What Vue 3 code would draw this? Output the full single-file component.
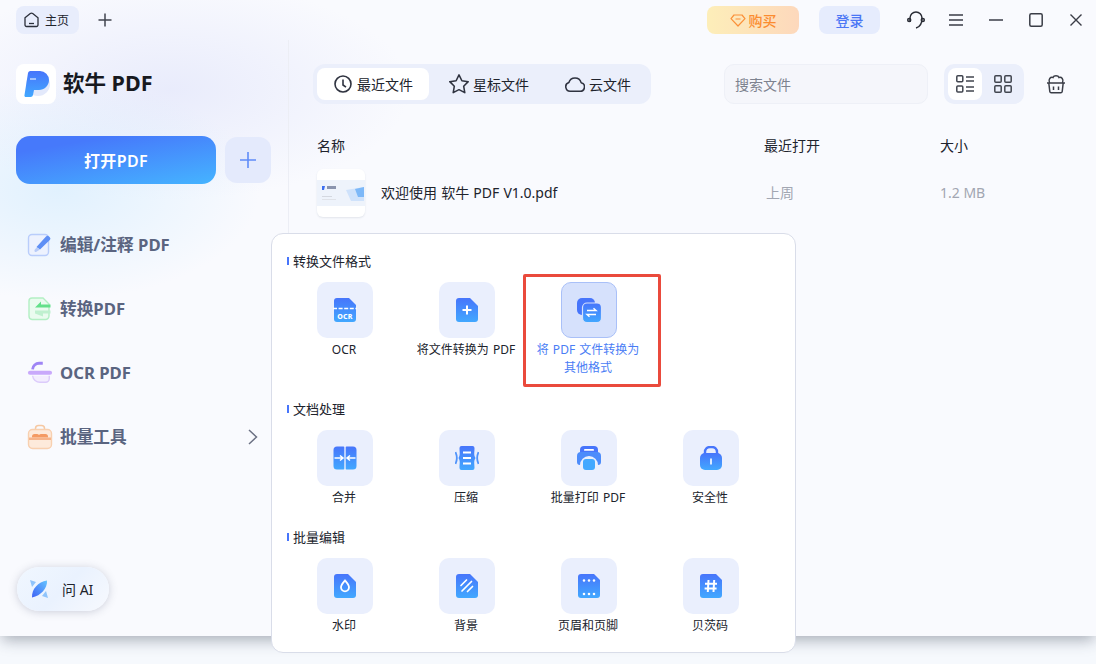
<script setup>
const tabs = [
  { label: '最近文件', icon: 'i-clock', active: true },
  { label: '星标文件', icon: 'i-star' },
  { label: '云文件', icon: 'i-cloud' },
]

const navItems = [
  { label: '编辑/注释 PDF', icon: 'n-edit' },
  { label: '转换PDF', icon: 'n-convert' },
  { label: 'OCR PDF', icon: 'n-ocr' },
  { label: '批量工具', icon: 'n-batch', more: true },
]

const sections = [
  {
    title: '转换文件格式',
    tools: [
      { label: 'OCR', icon: 't-ocr' },
      { label: '将文件转换为 PDF', icon: 't-add' },
      { label: '将 PDF 文件转换为\n其他格式', icon: 't-convert', active: true },
    ],
  },
  {
    title: '文档处理',
    tools: [
      { label: '合并', icon: 't-merge' },
      { label: '压缩', icon: 't-compress' },
      { label: '批量打印 PDF', icon: 't-print' },
      { label: '安全性', icon: 't-lock' },
    ],
  },
  {
    title: '批量编辑',
    tools: [
      { label: '水印', icon: 't-water' },
      { label: '背景', icon: 't-bg' },
      { label: '页眉和页脚', icon: 't-header' },
      { label: '贝茨码', icon: 't-bates' },
    ],
  },
]
</script>

<template>
  <div class="window">
    <svg class="defs" width="0" height="0" aria-hidden="true">
      <defs>
        <linearGradient id="blue" x1="0" y1="0" x2="0" y2="1">
          <stop offset="0" stop-color="#4775fb" />
          <stop offset="1" stop-color="#42a8ff" />
        </linearGradient>
        <linearGradient id="leaf" x1="0" y1="1" x2="1" y2="0">
          <stop offset="0" stop-color="#3f62f5" />
          <stop offset="1" stop-color="#63c4ff" />
        </linearGradient>
        <symbol id="t-ocr" viewBox="0 0 24 24">
          <path d="M4 0h12l7 7v14a3 3 0 0 1-3 3H4a3 3 0 0 1-3-3V3a3 3 0 0 1 3-3z" fill="url(#blue)" />
          <path d="M0 10.500h24" stroke="#fff" stroke-width="1.400" stroke-dasharray="4 1.600" />
          <text x="12" y="20.500" text-anchor="middle" class="ocr-text">OCR</text>
        </symbol>
        <symbol id="t-add" viewBox="0 0 24 24">
          <path d="M4 0h11l8 8v13a3 3 0 0 1-3 3H4a3 3 0 0 1-3-3V3a3 3 0 0 1 3-3z" fill="url(#blue)" />
          <path d="M12 7.500v9M7.500 12h9" stroke="#fff" stroke-width="2" />
        </symbol>
        <symbol id="t-convert" viewBox="0 0 24 24">
          <rect x="0" y="0" width="18" height="17" rx="5" fill="#4775fb" />
          <rect x="5.500" y="5" width="19" height="19.500" rx="4.500" fill="url(#blue)" stroke="#d6e1fc" stroke-width="1.200" />
          <path d="M10 12.500h9l-2.500-2.200M19 16.500h-9l2.500 2.200" fill="none" stroke="#fff" stroke-width="1.400" />
        </symbol>
        <symbol id="t-merge" viewBox="0 0 24 24">
          <path d="M4 .5h6.500a.8.8 0 0 1 .8.8v21.400a.8.8 0 0 1-.8.8H4a3.500 3.500 0 0 1-3.500-3.500V4A3.500 3.500 0 0 1 4 .5zM13.500.5H20A3.500 3.500 0 0 1 23.500 4v16a3.500 3.500 0 0 1-3.500 3.500h-6.500a.8.8 0 0 1-.8-.8V1.300a.8.8 0 0 1 .8-.8z" fill="url(#blue)" />
          <path d="M1.500 12h7.500M22.500 12H15M7 9.500 10 12l-3 2.500M17 9.500 14 12l3 2.500" fill="none" stroke="#fff" stroke-width="1.500" />
        </symbol>
        <symbol id="t-compress" viewBox="0 0 24 24">
          <path d="M4.500 2a2 2 0 0 1 2-2h11a2 2 0 0 1 2 2c0 5-1 6.500 1 10-2 3.500-1 5-1 10a2 2 0 0 1-2 2h-11a2 2 0 0 1-2-2c0-5 1-6.500-1-10 2-3.500 1-5 1-10z" fill="url(#blue)" />
          <path d="M8 6.500h8M8 12h8M8 17.500h8" stroke="#fff" stroke-width="2" />
          <path d="M.5 6c1.800 4 1.800 8 0 12M23.500 6c-1.800 4-1.800 8 0 12" fill="none" stroke="#4f93fb" stroke-width="1.800" />
        </symbol>
        <symbol id="t-print" viewBox="0 0 24 24">
          <path d="M7 0h10a4 4 0 0 1 4 4v3H3V4a4 4 0 0 1 4-4z" fill="#4775fb" />
          <rect x="7" y="3" width="10" height="1.800" rx=".9" fill="#fff" />
          <path d="M4 6h16a4 4 0 0 1 4 4v6a3 3 0 0 1-3 3 8.500 8.500 0 0 0-18 0 3 3 0 0 1-3-3v-6a4 4 0 0 1 4-4z" fill="#4c8cfb" />
          <rect x="6" y="13" width="12" height="11" rx="3" fill="#42a8ff" />
        </symbol>
        <symbol id="t-lock" viewBox="0 0 24 24">
          <path d="M6 9V6a5 5 0 0 1 5-5h2a5 5 0 0 1 5 5v3" fill="none" stroke="#4775fb" stroke-width="2.400" />
          <rect x="1" y="7" width="22" height="17" rx="5" fill="url(#blue)" />
          <rect x="11.200" y="12.500" width="1.600" height="6" fill="#fff" />
        </symbol>
        <symbol id="t-water" viewBox="0 0 24 24">
          <path d="M4 0h11l8 8v13a3 3 0 0 1-3 3H4a3 3 0 0 1-3-3V3a3 3 0 0 1 3-3z" fill="url(#blue)" />
          <path d="M12 6.500c2.500 3 4 4.600 4 6.800a4 4 0 0 1-8 0c0-2.200 1.500-3.800 4-6.800z" fill="none" stroke="#fff" stroke-width="1.800" />
        </symbol>
        <symbol id="t-bg" viewBox="0 0 24 24">
          <path d="M4 0h11l8 8v13a3 3 0 0 1-3 3H4a3 3 0 0 1-3-3V3a3 3 0 0 1 3-3z" fill="url(#blue)" />
          <path d="M6 11.500 11.500 6M7 17l9.500-9.500M12.500 17.500 17.500 12.500" stroke="#fff" stroke-width="1.700" stroke-linecap="round" />
        </symbol>
        <symbol id="t-header" viewBox="0 0 24 24">
          <path d="M4 0h13l6 6v15a3 3 0 0 1-3 3H4a3 3 0 0 1-3-3V3a3 3 0 0 1 3-3z" fill="url(#blue)" />
          <path d="M7 6.500h.01M12 6.500h.01M17 6.500h.01M7 20h.01M12 20h.01M17 20h.01" stroke="#fff" stroke-width="2.600" stroke-linecap="round" />
        </symbol>
        <symbol id="t-bates" viewBox="0 0 24 24">
          <path d="M4 0h13l6 6v15a3 3 0 0 1-3 3H4a3 3 0 0 1-3-3V3a3 3 0 0 1 3-3z" fill="url(#blue)" />
          <path d="M9.500 6 8.800 18M15.200 6l-.7 12M6 9.800h12M5.600 14.400h12" stroke="#fff" stroke-width="2" />
        </symbol>
        <symbol id="i-clock" viewBox="0 0 20 20">
          <circle cx="10" cy="10" r="8" fill="none" stroke="#2f3340" stroke-width="1.600" />
          <path d="M10 5.500V11l3 2.200" fill="none" stroke="#2f3340" stroke-width="1.600" />
        </symbol>
        <symbol id="i-star" viewBox="1 1 18 18">
          <path d="m10 1.800 2.600 5.300 5.700.8-4.100 4.100 1 5.800L10 15.100l-5.200 2.700 1-5.800L1.700 7.900l5.700-.8z" fill="none" stroke="#2f3340" stroke-width="1.400" stroke-linejoin="round" />
        </symbol>
        <symbol id="i-cloud" viewBox="1 1 18 18">
          <path d="M6 16.500h8.500a3.900 3.900 0 0 0 1-7.700 5.700 5.700 0 0 0-11-.1A4 4 0 0 0 6 16.500z" fill="none" stroke="#2f3340" stroke-width="1.400" stroke-linejoin="round" />
        </symbol>
        <symbol id="n-edit" viewBox="0 0 26 26">
          <rect x="1.500" y="2.500" width="20" height="21" rx="3.500" fill="#edf2fe" stroke="#b9cdfb" stroke-width="1.400" />
          <path d="M9.500 15 19 4.500a2 2 0 0 1 3 0l.8.800a2 2 0 0 1 0 2.800L13 17.500z" fill="#5f8ff5" />
          <path d="M9.500 15.500 13 17.500 9 20a1.500 1.500 0 0 1-1.500-2z" fill="#b7cbf8" />
        </symbol>
        <symbol id="n-convert" viewBox="0 0 26 26">
          <path d="M5 2h11l6 6v12a3.500 3.500 0 0 1-3.500 3.500H5A3.500 3.500 0 0 1 2 20V5a3 3 0 0 1 3-3z" fill="#eafbef" stroke="#b3efc4" stroke-width="1.400" />
          <path d="M8 11.500 14 5.500v3h9.500v3z" fill="#63e08a" />
          <path d="M8 14.500h15.500v3h-7.500v3l-8-3z" fill="#bff0cf" />
        </symbol>
        <symbol id="n-ocr" viewBox="0 0 28 26">
          <path d="M6 9a7 7 0 0 1 7-6.500h4" fill="none" stroke="#9f85f5" stroke-width="3" />
          <path d="M6 16a8 8 0 0 0 8 7h6a4 4 0 0 0 4-4v-3" fill="#f3edfe" stroke="#dccbfb" stroke-width="1.500" />
          <rect x="1" y="10.500" width="26" height="4.500" rx="2.200" fill="#c9a9fb" />
        </symbol>
        <symbol id="n-batch" viewBox="0 0 26 26">
          <path d="M8.500 6V4.500A3 3 0 0 1 11.500 1.500h3a3 3 0 0 1 3 3V6" fill="none" stroke="#f6c8a2" stroke-width="1.500" />
          <rect x="1.500" y="5.500" width="23" height="19" rx="4" fill="#fdeadb" stroke="#f8d0b0" stroke-width="1.400" />
          <path d="M5 12.500a2.500 2.500 0 0 1 2.500-2.500h2.500a2.500 2.500 0 0 1 2 1 2.500 2.500 0 0 1 2-1h4.500a2.500 2.500 0 0 1 2.500 2.500v1H5z" fill="#f49a63" />
          <rect x="2" y="13.500" width="22" height="2.500" fill="#f7b48a" />
        </symbol>
      </defs>
    </svg>

    <header class="topbar">
      <div class="home-tab">
        <svg width="15" height="16" viewBox="0 0 15 16" fill="none" stroke="#2b2f3a" stroke-width="1.300">
          <path d="M1 5.800 6.300 1.500a2 2 0 0 1 2.400 0L14 5.800V13a1.500 1.500 0 0 1-1.500 1.500h-10A1.500 1.500 0 0 1 1 13z" />
          <path d="M5 11.500h5" />
        </svg>
        <span>主页</span>
      </div>
      <svg class="new-tab" width="14" height="14" viewBox="0 0 14 14" stroke="#40444f" stroke-width="1.500">
        <path d="M7 .5v13M.5 7h13" />
      </svg>
      <div class="top-right">
        <button class="buy-btn">
          <svg width="16" height="13" viewBox="0 0 16 13" fill="none" stroke="#fb9038" stroke-width="1.200">
            <path d="M4 1h8l3 3.700-7 7.300-7-7.300zM5.500 5h5" stroke-linejoin="round" />
          </svg>
          购买
        </button>
        <button class="login-btn">登录</button>
        <div class="win-btn">
          <svg width="20" height="20" viewBox="0 0 20 20" fill="none" stroke="#2a2d36" stroke-width="1.500">
            <path d="M4 12V8a6 6 0 0 1 12 0c0 6-2 9-6 10" />
            <circle cx="3.200" cy="10" r="1.500" />
            <circle cx="16.800" cy="10" r="1.500" />
          </svg>
        </div>
        <div class="win-btn">
          <svg width="14" height="12" viewBox="0 0 14 12" stroke="#3a3d47" stroke-width="1.500">
            <path d="M0 1h14M0 6h14M0 11h14" />
          </svg>
        </div>
        <div class="win-btn">
          <svg width="14" height="2" viewBox="0 0 14 2" stroke="#3a3d47" stroke-width="1.500">
            <path d="M0 1h14" />
          </svg>
        </div>
        <div class="win-btn">
          <svg width="14" height="14" viewBox="0 0 14 14" fill="none" stroke="#3a3d47" stroke-width="1.500">
            <rect x=".8" y=".8" width="12.400" height="12.400" rx="1.500" />
          </svg>
        </div>
        <div class="win-btn">
          <svg width="12" height="12" viewBox="0 0 12 12" stroke="#3a3d47" stroke-width="1.400">
            <path d="m.5.500 11 11M11.500.5l-11 11" />
          </svg>
        </div>
      </div>
    </header>

    <div class="body">
      <aside class="sidebar">
        <div class="brand">
          <div class="logo">
            <svg width="32" height="32" viewBox="0 0 32 32">
              <circle cx="18" cy="16" r="12" fill="#e3e9fb" />
              <path d="M10 3h10a9 9 0 0 1 9 9c0 6-5 10-10 10h-5l-1 5a2.500 2.500 0 0 1-2.500 2H6a1.500 1.500 0 0 1-1.500-2L8 5a2.500 2.500 0 0 1 2-2z" fill="url(#blue)" />
              <path d="M10 11h6" stroke="#fff" stroke-width="1" />
            </svg>
          </div>
          <span class="brand-name">软牛 PDF</span>
        </div>

        <div class="open-row">
          <button class="open-btn">打开PDF</button>
          <button class="add-btn">
            <svg width="16" height="16" viewBox="0 0 16 16" stroke="#5f8cf8" stroke-width="1.600">
              <path d="M8 0v16M0 8h16" />
            </svg>
          </button>
        </div>

        <nav class="nav">
          <div v-for="item in navItems" :key="item.label" class="nav-item">
            <svg width="26" height="26"><use :href="'#' + item.icon" /></svg>
            <span>{{ item.label }}</span>
            <svg v-if="item.more" class="chevron" width="10" height="16" viewBox="0 0 10 16" fill="none" stroke="#6b7083" stroke-width="1.500">
              <path d="m1 1 7.500 7L1 15" />
            </svg>
          </div>
        </nav>

        <div class="ask-ai">
          <svg width="20" height="20" viewBox="0 0 20 20">
            <path d="M1 1 7 3 3 8zM19 19l-6-2 4-5z" fill="#8fc4fb" />
            <path d="M18 1.500c.5 8-6 15-15 17C2.500 10 9 3 18 1.500z" fill="url(#leaf)" />
          </svg>
          <span>问 AI</span>
        </div>
      </aside>

      <main class="main">
        <div class="toolbar">
          <div class="tabs">
            <div v-for="tab in tabs" :key="tab.label" class="tab" :class="{ active: tab.active }">
              <svg width="20" height="20"><use :href="'#' + tab.icon" /></svg>
              <span>{{ tab.label }}</span>
            </div>
          </div>
          <div class="search">搜索文件</div>
          <div class="views">
            <div class="view active">
              <svg width="18" height="18" viewBox="0 0 18 18" fill="none" stroke="#41454f" stroke-width="1.500">
                <rect x=".8" y=".8" width="6" height="6" rx="1" />
                <rect x=".8" y="11" width="6" height="6" rx="1" />
                <path d="M10 2h8M10 6h8M10 12h8M10 16h8" />
              </svg>
            </div>
            <div class="view">
              <svg width="18" height="18" viewBox="0 0 18 18" fill="none" stroke="#41454f" stroke-width="1.500">
                <rect x=".8" y=".8" width="6.400" height="6.400" rx="1" />
                <rect x="10.800" y=".8" width="6.400" height="6.400" rx="1" />
                <rect x=".8" y="10.800" width="6.400" height="6.400" rx="1" />
                <rect x="10.800" y="10.800" width="6.400" height="6.400" rx="1" />
              </svg>
            </div>
          </div>
          <div class="trash">
            <svg width="20" height="20" viewBox="0 0 20 20" fill="none" stroke="#3a3d47" stroke-width="1.500">
              <path d="M1 9h18M2.800 9l1 8.500a1.500 1.500 0 0 0 1.500 1.300h9.400a1.500 1.500 0 0 0 1.500-1.300l1-8.500M7.500 12.500v3.500M12.500 12.500v3.500" />
              <path d="M3.500 9C2 5 4.500 2.800 7 3.500c.8-2.300 5.200-2.300 6 0 2.500-.7 5 1.500 3.500 5.500" />
            </svg>
          </div>
        </div>

        <div class="file-head">
          <span>名称</span>
          <span>最近打开</span>
          <span>大小</span>
        </div>
        <div class="file-row">
          <div class="file-name">
            <div class="thumb">
              <svg width="48" height="26" viewBox="0 0 48 26">
                <rect width="48" height="26" fill="#eef3fb" />
                <path d="M5 6h3l-1 4H5z" fill="#3d6ff0" />
                <rect x="10" y="6" width="9" height="3" fill="#8a94ae" />
                <path d="M29 10l18-3v14H34z" fill="#cfe2fb" />
                <path d="M38 9l9-2v10h-6z" fill="#7db8f8" />
                <rect x="5" y="16" width="10" height="1" fill="#d4d8e0" />
                <rect x="5" y="19" width="14" height="1" fill="#dfe2e8" />
              </svg>
            </div>
            <span class="row-text name-text">欢迎使用 软牛 PDF V1.0.pdf</span>
          </div>
          <span class="row-text muted recent">上周</span>
          <span class="row-text muted">1.2 MB</span>
        </div>
      </main>
    </div>

    <div class="tool-popup">
      <section v-for="section in sections" :key="section.title" class="tool-section">
        <h3>{{ section.title }}</h3>
        <div class="tool-grid">
          <div v-for="tool in section.tools" :key="tool.label" class="tool" :class="{ active: tool.active }">
            <div class="tool-icon">
              <svg width="24" height="24"><use :href="'#' + tool.icon" /></svg>
            </div>
            <div class="tool-label">{{ tool.label }}</div>
          </div>
        </div>
      </section>
      <div class="highlight"></div>
    </div>
  </div>
</template>

<style scoped>
.window {
  position: relative;
  height: 636px;
  display: flex;
  flex-direction: column;
  background:
    radial-gradient(ellipse 200px 110px at 60px 190px, rgba(195, 230, 255, .45), rgba(195, 230, 255, 0)),
    radial-gradient(ellipse 240px 110px at 170px 90px, rgba(222, 226, 250, .6), rgba(222, 226, 250, 0)),
    #f9fafe;
  box-shadow: 0 6px 14px -2px rgba(40, 50, 70, .38);
  font-family: "Noto Sans", "Noto Sans CJK SC", sans-serif;
  color: #20232c;
}

.defs {
  position: absolute;
}

.ocr-text {
  font: 800 7px "Noto Sans", sans-serif;
  fill: #fff;
  letter-spacing: .3px;
}

button {
  border: none;
  font-family: inherit;
  padding: 0;
}

.topbar {
  height: 40px;
  flex: none;
  display: flex;
  align-items: flex-start;
  padding: 6px 0 0 16px;
  box-sizing: border-box;
}

.home-tab {
  width: 63px;
  height: 28px;
  box-sizing: border-box;
  padding-left: 8px;
  display: flex;
  align-items: center;
  gap: 6px;
  background: #e8edfc;
  border-radius: 8px;
  font-size: 12px;
}

.new-tab {
  margin: 7px 0 0 19px;
}

.top-right {
  margin-left: auto;
  display: flex;
  align-items: center;
}

.buy-btn,
.login-btn {
  height: 28px;
  border-radius: 8px;
  font-size: 14px;
  font-weight: 500;
  display: flex;
  align-items: center;
  justify-content: center;
}

.buy-btn {
  width: 92px;
  gap: 3px;
  background: linear-gradient(90deg, #fdeeb9, #fdd8bc);
  color: #fb8c30;
}

.login-btn {
  width: 61px;
  margin: 0 16px 0 20px;
  background: #e6ecfd;
  color: #4a76f5;
}

.win-btn {
  width: 40px;
  height: 28px;
  display: flex;
  align-items: center;
  justify-content: center;
}

.body {
  flex: 1;
  display: flex;
  min-height: 0;
}

.sidebar {
  width: 289px;
  flex: none;
  box-sizing: border-box;
  border-right: 1px solid #eceef5;
  padding: 24px 0 25px 16px;
  display: flex;
  flex-direction: column;
}

.brand {
  display: flex;
  align-items: center;
  gap: 7px;
}

.logo {
  width: 40px;
  height: 40px;
  border-radius: 8px;
  background: #fff;
  display: flex;
  align-items: center;
  justify-content: center;
}

.brand-name {
  font-size: 21.500px;
  font-weight: 700;
  color: #17191f;
  padding-bottom: 6px;
}

.open-row {
  display: flex;
  align-items: center;
  gap: 9px;
  margin-top: 32px;
}

.open-btn {
  width: 200px;
  height: 48px;
  border-radius: 14px;
  background: linear-gradient(170deg, #4679fb 20%, #45b4ff 100%);
  color: #fff;
  font-size: 16px;
  letter-spacing: .4px;
  font-weight: 600;
}

.add-btn {
  width: 46px;
  height: 46px;
  border-radius: 12px;
  background: #e4eafc;
  display: flex;
  align-items: center;
  justify-content: center;
}

.nav {
  margin-top: 29px;
}

.nav-item {
  height: 64px;
  display: flex;
  align-items: center;
  gap: 7px;
  padding-left: 11px;
  padding-right: 30px;
  font-size: 16.700px;
  font-weight: 700;
  color: #5a6480;
}

.nav-item span {
  padding-bottom: 2px;
}

.chevron {
  margin-left: auto;
}

.ask-ai {
  margin-top: auto;
  margin-left: 1px;
  width: 92px;
  height: 44px;
  box-sizing: border-box;
  padding-left: 12px;
  display: flex;
  align-items: center;
  gap: 13px;
  border-radius: 22px;
  background: linear-gradient(135deg, #f0f7ff, #eaf2fe 50%, #f7f9fe);
  box-shadow: 0 1px 8px rgba(70, 80, 110, .25);
  font-size: 14px;
}

.main {
  flex: 1;
  min-width: 0;
  padding: 24px 0 0 24px;
}

.toolbar {
  display: flex;
  align-items: center;
}

.tabs {
  display: flex;
  gap: 4px;
  padding: 4px;
  background: #ebeffb;
  border-radius: 12px;
}

.tab {
  height: 32px;
  padding: 0 16px;
  display: flex;
  align-items: center;
  gap: 4px;
  border-radius: 8px;
  font-size: 14px;
}

.tab.active {
  background: #fff;
}

.search {
  width: 204px;
  height: 40px;
  box-sizing: border-box;
  margin-left: 73px;
  padding-left: 10px;
  display: flex;
  align-items: center;
  background: #f5f6fb;
  border: 1px solid #eef0f7;
  border-radius: 10px;
  font-size: 14px;
  color: #7d828f;
}

.views {
  display: flex;
  gap: 4px;
  margin-left: 16px;
  padding: 4px;
  background: #ebeffb;
  border-radius: 10px;
}

.view {
  width: 34px;
  height: 32px;
  display: flex;
  align-items: center;
  justify-content: center;
  border-radius: 8px;
}

.view.active {
  background: #fff;
}

.trash {
  width: 64px;
  display: flex;
  justify-content: center;
}

.file-head,
.file-row {
  display: grid;
  grid-template-columns: 447px 176px 1fr;
  align-items: center;
  padding-left: 4px;
  font-size: 14px;
}

.file-head {
  margin-top: 31px;
  height: 20px;
}

.file-row {
  margin-top: 14px;
}

.file-name {
  display: flex;
  align-items: center;
  gap: 16px;
}

.row-text {
  padding-bottom: 2px;
}

.name-text {
  word-spacing: .5px;
}

.thumb {
  width: 48px;
  height: 48px;
  border-radius: 6px;
  background: #fff;
  box-shadow: 0 1px 2px rgba(60, 70, 100, .12);
  display: flex;
  align-items: center;
  overflow: hidden;
}

.muted {
  color: #a2a6b2;
}

.recent {
  padding-left: 2px;
}

.tool-popup {
  position: absolute;
  left: 271px;
  top: 233px;
  width: 525px;
  height: 420px;
  box-sizing: border-box;
  padding: 18px 0 0 12px;
  background: #fff;
  border: 1px solid #d9dde9;
  border-radius: 12px;
}

.tool-section {
  margin-bottom: 21px;
}

.tool-section:first-child {
  margin-bottom: 23px;
}

.tool-section h3 {
  margin: 0 0 12px 3px;
  padding-left: 6px;
  height: 18px;
  line-height: 18px;
  font-size: 13px;
  font-weight: 400;
  background: linear-gradient(#4775fb, #4775fb) 0 50% / 2px 8px no-repeat;
}

.tool-grid {
  display: grid;
  grid-template-columns: repeat(4, 122px);
}

.tool {
  display: flex;
  flex-direction: column;
  align-items: center;
}

.tool-icon {
  width: 56px;
  height: 56px;
  box-sizing: border-box;
  border-radius: 10px;
  background: #eaeffd;
  display: flex;
  align-items: center;
  justify-content: center;
}

.tool-label {
  margin-top: 3px;
  margin-right: 2px;
  line-height: 18px;
  font-size: 12px;
  word-spacing: 1px;
  text-align: center;
  white-space: pre-line;
}

.tool.active .tool-icon {
  background: #d6e1fc;
  border: 1px solid #a9c0f8;
}

.tool.active .tool-label {
  color: #4a7df5;
}

.highlight {
  position: absolute;
  left: 251px;
  top: 40px;
  width: 138px;
  height: 113px;
  box-sizing: border-box;
  border: 3px solid #ea4a3c;
  border-radius: 2px;
}
</style>

<style>
html,
body {
  height: 664px;
  background: #f6f9fd;
}
</style>
